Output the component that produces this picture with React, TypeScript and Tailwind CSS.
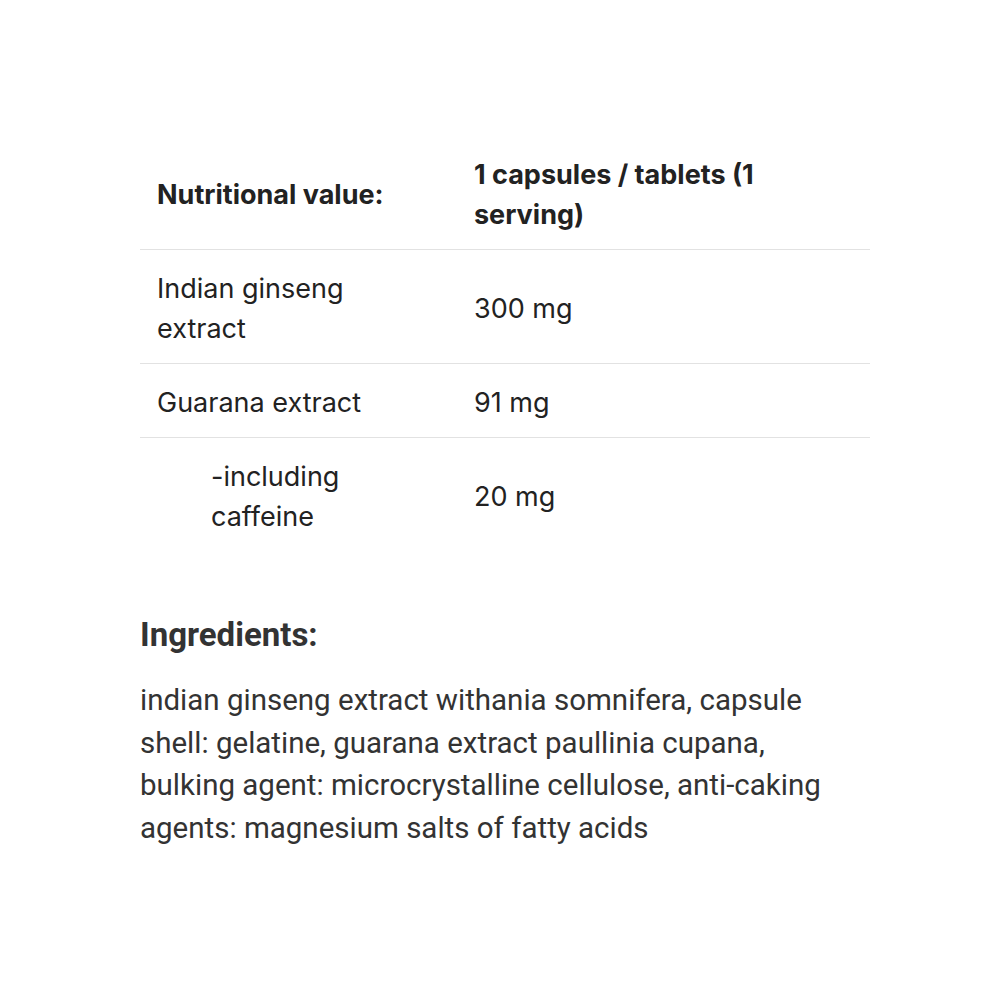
const rows = [
  { name: "Indian ginseng extract", value: "300 mg", indent: false },
  { name: "Guarana extract", value: "91 mg", indent: false },
  { name: "-including caffeine", value: "20 mg", indent: true },
];

export default function App() {
  return (
    <div className="min-h-[1000px] w-full bg-white pt-[136px]">
      <div className="ml-[140px] w-[730px]">
        {/* nutrition table */}
        <table className="w-full border-collapse font-['Inter',sans-serif] text-[27px] leading-[40px] text-[#222]">
          <thead>
            <tr className="border-b border-[#e2e2e2]">
              <th className="w-[317px] pt-[19px] pb-[14px] pl-[17px] pr-[40px] text-left align-middle font-bold">
                Nutritional value:
              </th>
              <th className="pt-[19px] pb-[14px] pl-[17px] pr-[17px] text-left align-middle font-bold">
                1 capsules / tablets (1 serving)
              </th>
            </tr>
          </thead>
          <tbody>
            {rows.map((row, idx) => (
              <tr
                key={idx}
                className={
                  idx < rows.length - 1 ? "border-b border-[#e2e2e2]" : ""
                }
              >
                <td
                  className={
                    row.indent
                      ? "pt-[19px] pb-[14px] pl-[71px] pr-[40px] align-middle"
                      : "pt-[19px] pb-[14px] pl-[17px] pr-[40px] align-middle"
                  }
                >
                  {row.name}
                </td>
                <td className="pt-[19px] pb-[14px] pl-[17px] align-middle">
                  {row.value}
                </td>
              </tr>
            ))}
          </tbody>
        </table>

        {/* ingredients */}
        <div className="mt-[64px] font-['Roboto',sans-serif] text-[#333]">
          <h2 className="text-[33px] font-bold leading-[40px]">Ingredients:</h2>
          <p className="mt-[24px] w-[700px] text-[29.5px] leading-[42.5px]">
            indian ginseng extract withania somnifera, capsule shell: gelatine,
            guarana extract paullinia cupana, bulking agent: microcrystalline
            cellulose, anti-caking agents: magnesium salts of fatty acids
          </p>
        </div>
      </div>
    </div>
  );
}
